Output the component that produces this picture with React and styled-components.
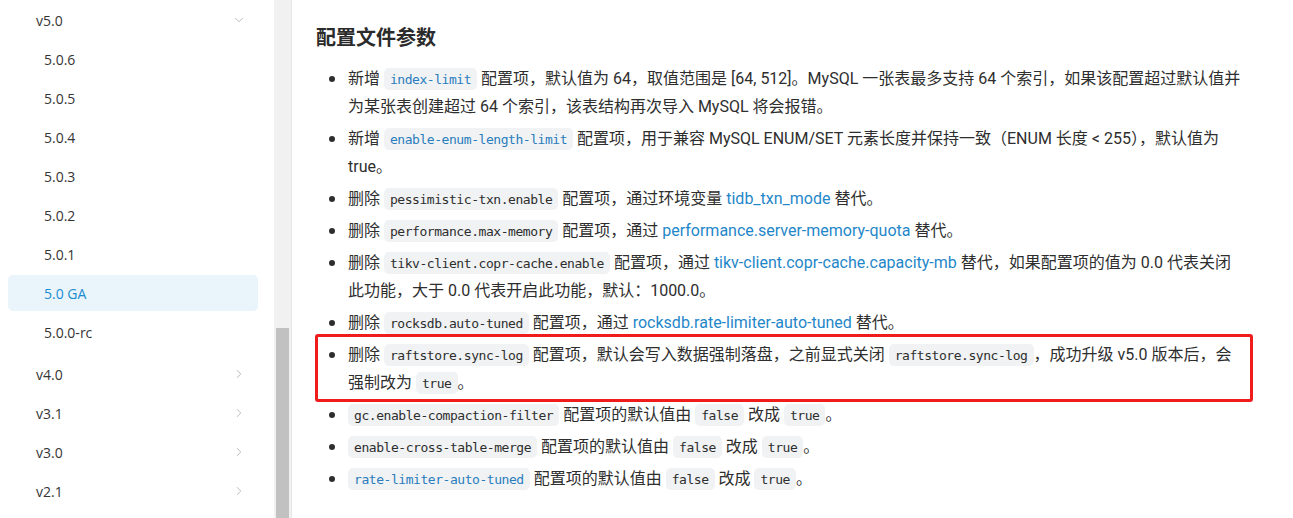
import React from "react";
import styled, { createGlobalStyle } from "styled-components";
import { ChevronDown, ChevronRight } from "lucide-react";

const Global = createGlobalStyle`
  html, body { margin: 0; padding: 0; background: #fff; }
  body { font-family: "Open Sans", "Noto Sans CJK SC", sans-serif; }
  #root { height: 518px; overflow: hidden; }
`;

const Page = styled.div`
  display: flex;
  height: 518px;
  overflow: hidden;
`;

const Sidebar = styled.nav`
  width: 274px;
  flex-shrink: 0;
  padding-top: 2px;
  box-sizing: border-box;
  font-size: 14px;
  color: #3a3a3a;
`;

const NavItem = styled.div`
  display: flex;
  align-items: center;
  justify-content: space-between;
  height: 36px;
  margin: 0 16px 3px 8px;
  padding: 0 12px 0 ${(p) => (p.$sub ? 36 : 28)}px;
  border-radius: 5px;
  background: ${(p) => (p.$active ? "#e9f4fb" : "transparent")};
  color: ${(p) => (p.$active ? "#1c8dd0" : "#353535")};
  white-space: nowrap;
  svg { color: #b0b0b0; }
`;

const SubList = styled.div`
  margin-bottom: 6px;
`;

const Track = styled.div`
  width: 17px;
  flex-shrink: 0;
  background: #f1f1f1;
  border-right: 1px solid #e6e6e6;
  display: flex;
  flex-direction: column;
  justify-content: flex-end;
`;

const Thumb = styled.div`
  height: 190px;
  margin: 0 2px;
  background: #c1c1c1;
`;

const Content = styled.main`
  flex: 1;
  padding: 24px 0 0 24px;
  color: #2e2e2e;
`;

const Article = styled.article`
  width: 928px;
`;

const Heading = styled.h3`
  margin: 0 0 13px;
  font-size: 20px;
  line-height: 28px;
  font-weight: 700;
  color: #2b2b2b;
`;

const List = styled.ul`
  list-style: none;
  margin: 0;
  padding: 0;
`;

const Item = styled.li`
  position: relative;
  display: flex;
  margin-bottom: 4px;
  font-family: "Roboto", "Noto Sans CJK SC", sans-serif;
  font-size: 16px;
  line-height: 28px;
`;

const Bullet = styled.span`
  flex: 0 0 32px;
  display: flex;
  justify-content: center;
  padding-top: 11px;
  box-sizing: border-box;
  &::before {
    content: "";
    width: 6px;
    height: 6px;
    border-radius: 50%;
    background: #2e2e2e;
  }
`;

const Body = styled.div`
  flex: 1;
`;

const Code = styled.code`
  font-family: "DejaVu Sans Mono", "Liberation Mono", monospace;
  font-size: 13px;
  letter-spacing: -0.45px;
  line-height: 16px;
  padding: 4px 6px 3px;
  border-radius: 5px;
  background: #f0f2f4;
  color: ${(p) => (p.$link ? "#2a7dbd" : "#2e2e2e")};
`;

const Link = styled.a`
  color: #1f87c9;
  text-decoration: none;
`;

const Highlight = styled.span`
  position: absolute;
  top: -7px;
  bottom: -5px;
  left: -1px;
  right: -9px;
  border: 3px solid #f01c1c;
  border-radius: 3px;
  pointer-events: none;
`;

const groups = [
  {
    label: "v5.0",
    open: true,
    items: ["5.0.6", "5.0.5", "5.0.4", "5.0.3", "5.0.2", "5.0.1", "5.0 GA", "5.0.0-rc"],
    active: "5.0 GA",
  },
  { label: "v4.0" },
  { label: "v3.1" },
  { label: "v3.0" },
  { label: "v2.1" },
];

export default function App() {
  return (
    <>
      <Global />
      <Page>
        <Sidebar>
          {groups.map((g) => (
            <React.Fragment key={g.label}>
              <NavItem>
                <span>{g.label}</span>
                {g.open ? (
                  <ChevronDown size={14} strokeWidth={1.5} />
                ) : (
                  <ChevronRight size={14} strokeWidth={1.5} />
                )}
              </NavItem>
              {g.open && (
                <SubList>
                  {g.items.map((it) => (
                    <NavItem key={it} $sub $active={it === g.active}>
                      {it}
                    </NavItem>
                  ))}
                </SubList>
              )}
            </React.Fragment>
          ))}
        </Sidebar>
        <Track>
          <Thumb />
        </Track>
        <Content>
          <Article>
            <Heading>配置文件参数</Heading>
            <List>
              <Item>
                <Bullet />
                <Body>
                  新增 <Code $link>index-limit</Code> 配置项，默认值为 64，取值范围是 [64, 512]。MySQL 一张表最多支持 64 个索引，如果该配置超过默认值并为某张表创建超过 64 个索引，该表结构再次导入 MySQL 将会报错。
                </Body>
              </Item>
              <Item>
                <Bullet />
                <Body>
                  新增 <Code $link>enable-enum-length-limit</Code> 配置项，用于兼容 MySQL ENUM/SET 元素长度并保持一致（ENUM 长度 &lt; 255），默认值为 true。
                </Body>
              </Item>
              <Item>
                <Bullet />
                <Body>
                  删除 <Code>pessimistic-txn.enable</Code> 配置项，通过环境变量 <Link href="#">tidb_txn_mode</Link> 替代。
                </Body>
              </Item>
              <Item>
                <Bullet />
                <Body>
                  删除 <Code>performance.max-memory</Code> 配置项，通过 <Link href="#">performance.server-memory-quota</Link> 替代。
                </Body>
              </Item>
              <Item>
                <Bullet />
                <Body>
                  删除 <Code>tikv-client.copr-cache.enable</Code> 配置项，通过 <Link href="#">tikv-client.copr-cache.capacity-mb</Link> 替代，如果配置项的值为 0.0 代表关闭此功能，大于 0.0 代表开启此功能，默认：1000.0。
                </Body>
              </Item>
              <Item>
                <Bullet />
                <Body>
                  删除 <Code>rocksdb.auto-tuned</Code> 配置项，通过 <Link href="#">rocksdb.rate-limiter-auto-tuned</Link> 替代。
                </Body>
              </Item>
              <Item>
                <Bullet />
                <Body>
                  删除 <Code>raftstore.sync-log</Code> 配置项，默认会写入数据强制落盘，之前显式关闭 <Code>raftstore.sync-log</Code>，成功升级 v5.0 版本后，会强制改为 <Code>true</Code>。
                </Body>
                <Highlight />
              </Item>
              <Item>
                <Bullet />
                <Body>
                  <Code>gc.enable-compaction-filter</Code> 配置项的默认值由 <Code>false</Code> 改成 <Code>true</Code>。
                </Body>
              </Item>
              <Item>
                <Bullet />
                <Body>
                  <Code>enable-cross-table-merge</Code> 配置项的默认值由 <Code>false</Code> 改成 <Code>true</Code>。
                </Body>
              </Item>
              <Item>
                <Bullet />
                <Body>
                  <Code $link>rate-limiter-auto-tuned</Code> 配置项的默认值由 <Code>false</Code> 改成 <Code>true</Code>。
                </Body>
              </Item>
            </List>
          </Article>
        </Content>
      </Page>
    </>
  );
}
